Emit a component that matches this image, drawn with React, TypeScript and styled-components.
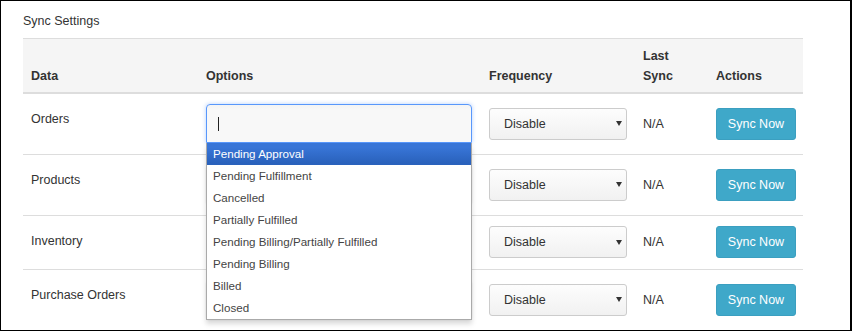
import React from "react";
import styled, { createGlobalStyle } from "styled-components";

const GlobalStyle = createGlobalStyle`
  html, body { margin: 0; padding: 0; background: #fff; }
  body {
    font-family: "Liberation Sans", Arial, sans-serif;
    font-size: 12.5px;
    color: #333;
  }
`;

const Frame = styled.div`
  box-sizing: border-box;
  width: 852px;
  height: 331px;
  border: 1px solid #000;
  border-right-width: 2px;
  padding: 10px 0 0 22px;
  overflow: hidden;
`;

const Title = styled.div`
  line-height: 20px;
  margin-bottom: 7px;
`;

const Table = styled.table`
  width: 780px;
  border-collapse: collapse;
  border-spacing: 0;
  table-layout: fixed;
`;

const HeadRow = styled.tr`
  background: #f5f5f5;
`;

const Th = styled.th`
  text-align: left;
  font-weight: bold;
  vertical-align: bottom;
  line-height: 20px;
  padding: 7px 8px 6px;
  border-top: 1px solid #ddd;
  border-bottom: 2px solid #ddd;
`;

const Td = styled.td<{ $top?: boolean }>`
  vertical-align: ${(p) => (p.$top ? "top" : "middle")};
  padding: ${(p) => (p.$top ? "15px 8px 10px" : "10px 8px 11px")};
  line-height: 20px;
  border-top: 1px solid #ddd;
`;

const ChosenBox = styled.div<{ $active?: boolean }>`
  position: relative;
  box-sizing: border-box;
  display: flex;
  align-items: center;
  height: 39px;
  width: 266px;
  padding-left: 11px;
  border: 1px solid ${(p) => (p.$active ? "#5897fb" : "#bbb")};
  border-radius: ${(p) => (p.$active ? "4px 4px 0 0" : "4px")};
  background: ${(p) =>
    p.$active ? "linear-gradient(#f4f4f4 1%, #f8f8f8 15%)" : "#fff"};
  box-shadow: ${(p) =>
    p.$active ? "0 0 4px rgba(88,151,251,.45)" : "0 1px 2px rgba(0,0,0,.12)"};
`;

const Caret = styled.span`
  display: block;
  width: 1px;
  height: 14px;
  background: #222;
`;

const DropList = styled.ul`
  position: absolute;
  z-index: 10;
  top: calc(100% + 1px);
  left: -1px;
  right: -1px;
  margin: 0;
  padding: 0;
  list-style: none;
  background: #fff;
  border: 1px solid #aaa;
  border-top: 0;
  box-shadow: 0 4px 5px rgba(0, 0, 0, 0.15);
`;

const DropItem = styled.li<{ $hl?: boolean }>`
  height: 22px;
  line-height: 22px;
  padding: 0 6px;
  font-size: 11.6px;
  white-space: nowrap;
  color: ${(p) => (p.$hl ? "#fff" : "#444")};
  background: ${(p) =>
    p.$hl ? "linear-gradient(#3875d7 20%, #2a62bc 90%)" : "transparent"};
`;

const Select = styled.div`
  box-sizing: border-box;
  display: flex;
  align-items: center;
  justify-content: space-between;
  width: 138px;
  height: 32px;
  padding: 0 4px 0 14px;
  border: 1px solid #ccc;
  border-radius: 3px;
  background: linear-gradient(#fdfdfd, #f1f1f1);
  color: #333;
`;

const Arrow = styled.svg`
  display: block;
  width: 6px;
  height: 5px;
  fill: #333;
`;

const SyncButton = styled.button`
  box-sizing: border-box;
  display: block;
  width: 80px;
  height: 32px;
  padding: 0;
  border: 1px solid #3b9fc0;
  border-radius: 3px;
  background: #3fa8c9;
  color: #fff;
  font-family: inherit;
  font-size: 12.5px;
  cursor: pointer;
`;

const statuses = [
  "Pending Approval",
  "Pending Fulfillment",
  "Cancelled",
  "Partially Fulfilled",
  "Pending Billing/Partially Fulfilled",
  "Pending Billing",
  "Billed",
  "Closed",
];

type RowDef = { name: string; options: "active" | "box" | "none" };

const rows: RowDef[] = [
  { name: "Orders", options: "active" },
  { name: "Products", options: "box" },
  { name: "Inventory", options: "none" },
  { name: "Purchase Orders", options: "box" },
];

function FreqSelect() {
  return (
    <Select>
      <span>Disable</span>
      <Arrow viewBox="0 0 6 5">
        <polygon points="0,0 6,0 3,5" />
      </Arrow>
    </Select>
  );
}

function OptionsCell({ kind }: { kind: RowDef["options"] }) {
  if (kind === "none") return null;
  if (kind === "box") return <ChosenBox />;
  return (
    <ChosenBox $active>
      <Caret />
      <DropList>
        {statuses.map((s, i) => (
          <DropItem key={s} $hl={i === 0}>
            {s}
          </DropItem>
        ))}
      </DropList>
    </ChosenBox>
  );
}

export default function App() {
  return (
    <>
      <GlobalStyle />
      <Frame>
        <Title>Sync Settings</Title>
        <Table>
          <colgroup>
            <col style={{ width: 175 }} />
            <col style={{ width: 283 }} />
            <col style={{ width: 154 }} />
            <col style={{ width: 73 }} />
            <col style={{ width: 95 }} />
          </colgroup>
          <thead>
            <HeadRow>
              <Th>Data</Th>
              <Th>Options</Th>
              <Th>Frequency</Th>
              <Th>Last Sync</Th>
              <Th>Actions</Th>
            </HeadRow>
          </thead>
          <tbody>
            {rows.map((r) => (
              <tr key={r.name}>
                <Td $top>{r.name}</Td>
                <Td>
                  <OptionsCell kind={r.options} />
                </Td>
                <Td>
                  <FreqSelect />
                </Td>
                <Td>N/A</Td>
                <Td>
                  <SyncButton type="button">Sync Now</SyncButton>
                </Td>
              </tr>
            ))}
          </tbody>
        </Table>
      </Frame>
    </>
  );
}
